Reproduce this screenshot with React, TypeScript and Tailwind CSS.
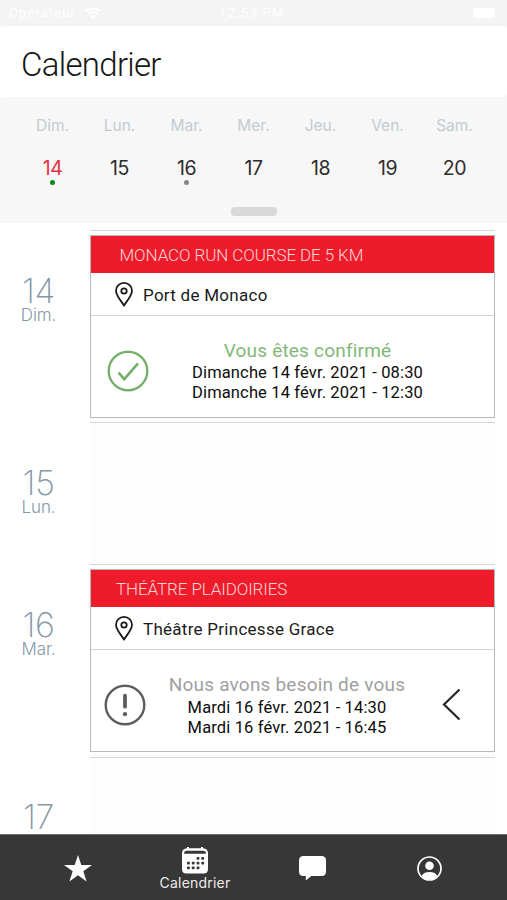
import React from "react";

const days = [
  { name: "Dim.", num: 14, color: "text-[#e5303f]", dot: "bg-[#078a12]" },
  { name: "Lun.", num: 15, color: "text-[#2d2d2d]", dot: "bg-transparent" },
  { name: "Mar.", num: 16, color: "text-[#2d2d2d]", dot: "bg-[#858585]" },
  { name: "Mer.", num: 17, color: "text-[#2d2d2d]", dot: "bg-transparent" },
  { name: "Jeu.", num: 18, color: "text-[#2d2d2d]", dot: "bg-transparent" },
  { name: "Ven.", num: 19, color: "text-[#2d2d2d]", dot: "bg-transparent" },
  { name: "Sam.", num: 20, color: "text-[#2d2d2d]", dot: "bg-transparent" },
];

function StatusBar() {
  return (
    <div className="flex h-[26px] shrink-0 items-center justify-between bg-[#f4f4f4] pr-3 pl-[9px] text-[13px] leading-[26px] text-white">
      <div className="flex w-[120px] items-center gap-[9px]">
        <span className="tracking-[1.1px]">Opérateur</span>
        <svg width="16" height="12" viewBox="0 0 16 12" fill="#fff">
          <path d="M0 3.5a12 12 0 0 1 16 0L14.4 5.2a9.6 9.6 0 0 0-12.8 0zM2.6 6.2a8 8 0 0 1 10.8 0l-1.6 1.7a5.6 5.6 0 0 0-7.6 0zM5.2 9a4.2 4.2 0 0 1 5.6 0L8 12z" />
        </svg>
      </div>
      <span className="tracking-[1.3px]">12:53 PM</span>
      <div className="flex w-[120px] justify-end">
        <div className="h-[10px] w-[22px] rounded-[3px] bg-white" />
      </div>
    </div>
  );
}

function DateLabel({ num, name }: { num: number; name?: string }) {
  return (
    <div className="w-[90px] shrink-0 pr-[13px] text-center font-[Inter,sans-serif] text-[#8598a7]">
      <div className={"text-[34px] leading-[34px] font-[150] tracking-[-0.3px] " + (name ? "mt-[44px]" : "mt-[43px]")}>{num}</div>
      {name && <div className="-mt-px text-[17px] leading-[17px] font-light tracking-[-0.1px]">{name}</div>}
    </div>
  );
}

function Pin() {
  return (
    <svg width="18" height="25" viewBox="0 0 18 25" fill="none" stroke="#1b1b1b" strokeWidth="1.8">
      <path d="M9 23.6C7.2 20.2 1 13.8 1 8.7a8 7.8 0 0 1 16 0C17 13.8 10.8 20.2 9 23.6z" strokeLinejoin="round" />
      <circle cx="9" cy="9" r="2.7" />
    </svg>
  );
}

function ConfirmedIcon() {
  return (
    <svg width="42" height="42" viewBox="0 0 42 42" fill="none" stroke="#76b06b">
      <circle cx="21" cy="21" r="19.3" strokeWidth="2.4" />
      <path d="M11.6 22.6l5.7 6.6L31 13.4" strokeWidth="2.6" />
    </svg>
  );
}

function PendingIcon() {
  return (
    <svg width="42" height="42" viewBox="0 0 42 42" fill="none" stroke="#5d5d5d">
      <circle cx="21" cy="21" r="19.3" strokeWidth="2.4" />
      <path d="M21 11.7v11" strokeWidth="3.8" strokeLinecap="round" />
      <circle cx="21" cy="30.2" r="2.1" fill="#5d5d5d" stroke="none" />
    </svg>
  );
}

type EventProps = {
  title: string;
  titleClass: string;
  place: string;
  status: string;
  statusClass: string;
  dates: string[];
  datesClass: string;
  icon: React.ReactNode;
  iconClass: string;
  action?: React.ReactNode;
};

function EventCard(p: EventProps) {
  return (
    <div className="mt-[4px] flex h-[183px] w-[405px] flex-col border border-[#b9b9b9] bg-white">
      <div className={"h-[37px] shrink-0 bg-[#ee1c2b] text-[17px] leading-[38px] font-light tracking-[-0.1px] whitespace-nowrap text-[#ffd5d5] " + p.titleClass}>
        {p.title}
      </div>
      <div className="flex h-[43px] shrink-0 items-center gap-[10px] border-b border-[#d4d4d4] pl-6">
        <Pin />
        <span className="pt-[2px] text-[17px] leading-5 tracking-[0.27px] whitespace-nowrap text-[#1b1b1b]">{p.place}</span>
      </div>
      <div className="flex grow">
        <div className={"w-[70px] shrink-0 pt-[34px] " + p.iconClass}>{p.icon}</div>
        <div className={"w-[262px] shrink-0 pt-[24px] text-center whitespace-nowrap " + p.datesClass}>
          <div className={"text-[19px] leading-[22px] tracking-[0.2px] " + p.statusClass}>{p.status}</div>
          {p.dates.map((d) => (
            <div key={d} className="text-[16.5px] leading-[19.5px] tracking-[0.14px] text-[#0c0c0c]">{d}</div>
          ))}
        </div>
        <div className="flex grow pt-[38px] pl-[19px]">{p.action}</div>
      </div>
    </div>
  );
}

function Row({ num, name, height, children }: { num: number; name?: string; height: string; children?: React.ReactNode }) {
  return (
    <div className={"flex " + height}>
      <DateLabel num={num} name={name} />
      <div className="w-[405px] border-t border-[#d6d6d6] bg-[#fdfdfd]">{children}</div>
    </div>
  );
}

function TabBar() {
  return (
    <nav className="flex h-[66px] shrink-0 justify-center border-t border-[#707070] bg-[#373737] px-[19px] text-white">
      <div className="flex w-[117px] justify-center pt-[20px]">
        <svg width="28" height="27" viewBox="0 0 28 27" fill="#fff">
          <path d="M14 0l3.3 10H28l-8.7 6.3L22.6 26.5 14 20.3 5.4 26.5l3.3-10.2L0 10h10.7z" />
        </svg>
      </div>
      <div className="flex w-[118px] flex-col items-center pt-[12px]">
        <svg width="28" height="27" viewBox="0 0 28 27">
          <path d="M6 0h2v1.3h12V0h2v1.3q5 .3 5 5V22q0 4.5-4.5 4.5h-17Q1 26.5 1 22V6.3Q1 1.6 6 1.3z" fill="#fff" />
          <path d="M3 6.8Q3 3.7 6 3.7h16q3 0 3 3.1z" fill="#373737" />
          <g fill="#373737">
            <rect x="15.6" y="10" width="2.8" height="2.8" rx=".8" />
            <rect x="20.3" y="10" width="2.8" height="2.8" rx=".8" />
            <rect x="6" y="14.7" width="2.8" height="2.8" rx=".8" />
            <rect x="10.8" y="14.7" width="2.8" height="2.8" rx=".8" />
            <rect x="15.6" y="14.7" width="2.8" height="2.8" rx=".8" />
            <rect x="20.3" y="14.7" width="2.8" height="2.8" rx=".8" />
            <rect x="6" y="19.4" width="2.8" height="2.8" rx=".8" />
            <rect x="10.8" y="19.4" width="2.8" height="2.8" rx=".8" />
            <rect x="15.6" y="19.4" width="2.8" height="2.8" rx=".8" />
          </g>
        </svg>
        <span className="font-[Inter,sans-serif] text-[14px] leading-[17px] tracking-[0.2px] text-[#ececec]">Calendrier</span>
      </div>
      <div className="flex w-[117px] justify-center pt-[21px]">
        <svg width="27" height="25" viewBox="0 0 27 25" fill="#fff">
          <path d="M4.5 0h18Q27 0 27 4.5v11Q27 20 22.5 20H12.3L6.8 24.6V20H4.5Q0 20 0 15.5v-11Q0 0 4.5 0z" />
        </svg>
      </div>
      <div className="flex w-[117px] justify-center pt-[21px]">
        <svg width="25" height="25" viewBox="0 0 25 25">
          <circle cx="12.5" cy="12.5" r="11.5" fill="none" stroke="#fff" strokeWidth="1.7" />
          <circle cx="12.5" cy="9.8" r="4.3" fill="#fff" />
          <path d="M4.8 19.4q2.5-3.4 7.7-3.4t7.7 3.4q-2.8 4.3-7.7 4.3t-7.7-4.3z" fill="#fff" />
        </svg>
      </div>
    </nav>
  );
}

export default function App() {
  return (
    <div className="flex h-[900px] w-[507px] flex-col overflow-hidden bg-white font-[Roboto,sans-serif]">
      <StatusBar />
      <div className="shrink-0 bg-[#f5f5f5]">
        <header className="h-[71px] rounded-[4px] bg-white pt-[19px] pl-[21px] text-[33px] leading-[40px] font-light text-[#161616]">
          <span className="tracking-[-0.7px]">Calendrier</span>
        </header>
      </div>
      <section className="flex h-[126px] shrink-0 flex-col items-center bg-[#f7f7f7] font-[Inter,sans-serif]">
        <div className="grid w-[469px] grid-cols-7 pt-[18px]">
          {days.map((d) => (
            <div key={d.num} className="flex flex-col items-center">
              <span className="text-[15.5px] leading-[22px] text-[#c3cbd1]">{d.name}</span>
              <span className={"mt-[19px] text-[19.5px] leading-[24px] font-[370] tracking-[-0.4px] " + d.color}>{d.num}</span>
              <span className={"size-[5px] rounded-full " + d.dot} />
            </div>
          ))}
        </div>
        <div className="mt-[22px] ml-[1px] h-[9px] w-[46px] rounded-[4px] bg-[#d9d9d9]" />
      </section>
      <main className="flex min-h-0 grow flex-col pt-[7px]">
        <Row num={14} name="Dim." height="h-[192px] shrink-0">
          <EventCard
            title="MONACO RUN COURSE DE 5 KM"
            titleClass="pl-[28.5px]"
            place="Port de Monaco"
            status="Vous êtes confirmé"
            statusClass="mb-[1px] text-[#82b877]"
            dates={["Dimanche 14 févr. 2021 - 08:30", "Dimanche 14 févr. 2021 - 12:30"]}
            datesClass="pl-[31px]"
            icon={<ConfirmedIcon />}
            iconClass="pl-[16px]"
          />
        </Row>
        <Row num={15} name="Lun." height="h-[142px] shrink-0" />
        <Row num={16} name="Mar." height="h-[193px] shrink-0">
          <EventCard
            title="THÉÂTRE PLAIDOIRIES"
            titleClass="pl-[25px]"
            place="Théâtre Princesse Grace"
            status="Nous avons besoin de vous"
            statusClass="mb-[2px] text-[#a0a0a0]"
            dates={["Mardi 16 févr. 2021 - 14:30", "Mardi 16 févr. 2021 - 16:45"]}
            datesClass="pr-[10px]"
            icon={<PendingIcon />}
            iconClass="pl-[13px]"
            action={
              <svg width="20" height="34" viewBox="0 0 20 34" fill="none" stroke="#262626" strokeWidth="2.2">
                <path d="M17.5 1.5L2 16.5l15.5 15" />
              </svg>
            }
          />
        </Row>
        <Row num={17} height="grow" />
      </main>
      <TabBar />
    </div>
  );
}
